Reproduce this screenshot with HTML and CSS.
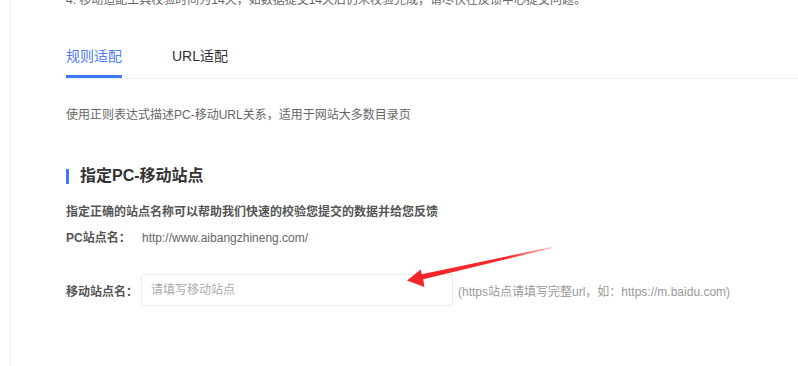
FILE: index.html
```html
<!DOCTYPE html>
<html lang="zh-CN">
<head>
<meta charset="utf-8">
<title>移动适配</title>
<link rel="stylesheet" href="styles.css">
</head>
<body>
<div class="page">
  <div class="card">
    <p class="notice">4. 移动适配工具校验时间为14天，如数据提交14天后仍未校验完成，请尽快在反馈中心提交问题。</p>
    <div class="tabs">
      <div class="tab tab-active">规则适配</div>
      <div class="tab">URL适配</div>
    </div>
    <p class="desc">使用正则表达式描述PC-移动URL关系，适用于网站大多数目录页</p>
    <h2 class="section-title">指定PC-移动站点</h2>
    <p class="subtitle">指定正确的站点名称可以帮助我们快速的校验您提交的数据并给您反馈</p>
    <div class="row row-pc">
      <span class="label">PC站点名：</span>
      <span class="value">http://www.aibangzhineng.com/</span>
    </div>
    <div class="row row-mobile">
      <span class="label">移动站点名：</span>
      <input class="input" type="text" placeholder="请填写移动站点">
      <span class="hint">(https站点请填写完整url，如：https://m.baidu.com)</span>
    </div>
  </div>
  <svg class="arrow" width="798" height="366" viewBox="0 0 798 366" aria-hidden="true">
    <defs>
      <linearGradient id="ag" x1="407" y1="280" x2="551" y2="247" gradientUnits="userSpaceOnUse">
        <stop offset="0" stop-color="#f5262a"/>
        <stop offset="0.7" stop-color="#f7282c"/>
        <stop offset="1" stop-color="#fb4a4e" stop-opacity="0.35"/>
      </linearGradient>
    </defs>
    <polygon fill="url(#ag)" points="407,280.5 420.8,269.6 421.8,274.2 551,247 551.4,248.2 423.3,279.2 424.3,287"/>
  </svg>
</div>
</body>
</html>
```
FILE: styles.css
```css
html, body {
  margin: 0;
  padding: 0;
  background: #fff;
}
body {
  font-family: "Liberation Sans", "Noto Sans CJK SC", sans-serif;
  font-size: 12px;
  color: #666;
  overflow: hidden;
}
.page {
  position: relative;
  width: 798px;
  height: 366px;
  overflow: hidden;
}
.card {
  margin-left: 10px;
  border-left: 1px solid #eeeeee;
  padding-left: 55px;
  height: 400px;
}
p, h2 {
  margin: 0;
}
.notice {
  margin-top: -10px;
  line-height: 20px;
  font-size: 12px;
  color: #666;
}
.tabs {
  display: flex;
  gap: 50px;
  margin-top: 36px;
  border-bottom: 1px solid #efefef;
}
.tab {
  font-size: 14px;
  line-height: 20px;
  padding-bottom: 9px;
  border-bottom: 3px solid transparent;
  color: #333;
}
.tab-active {
  color: #4f7cf6;
  border-bottom-color: #3e7af7;
}
.desc {
  margin-top: 26px;
  line-height: 20px;
  color: #666;
}
.section-title {
  margin-top: 39px;
  display: flex;
  align-items: center;
  gap: 11px;
  font-size: 16px;
  line-height: 24px;
  font-weight: bold;
  color: #333;
}
.section-title::before {
  content: "";
  width: 3px;
  height: 15px;
  background: #3e7af7;
}
.subtitle {
  margin-top: 14px;
  line-height: 20px;
  font-weight: bold;
  color: #555;
}
.row {
  display: flex;
  align-items: center;
}
.row-pc {
  margin-top: 6px;
  line-height: 20px;
}
.row-mobile {
  margin-top: 26px;
}
.label {
  width: 75px;
  font-weight: bold;
  color: #555;
  flex: none;
}
.value {
  margin-left: 1px;
  color: #666;
}
.input {
  box-sizing: border-box;
  width: 312px;
  height: 32px;
  margin: 0;
  padding: 0 9px;
  border: 1px solid #ececec;
  border-radius: 2px;
  font-family: "Liberation Sans", "Noto Sans CJK SC", sans-serif;
  font-size: 12px;
  color: #333;
  outline: none;
  background: #fff;
}
.input::placeholder {
  color: #aaa;
}
.hint {
  margin-left: 5px;
  color: #999;
}
.arrow {
  position: absolute;
  left: 0;
  top: 0;
  pointer-events: none;
}
```
